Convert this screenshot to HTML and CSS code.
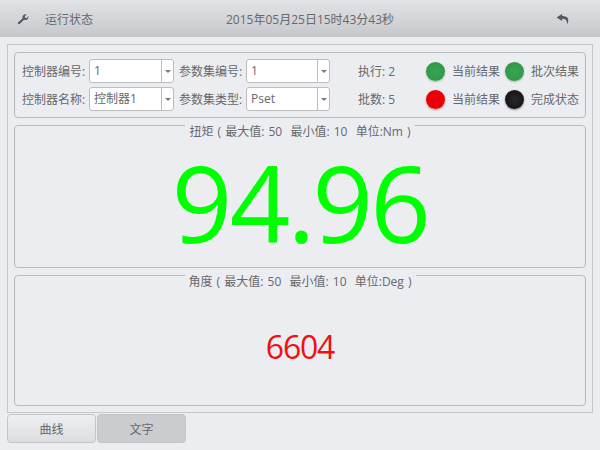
FILE: index.html
```html
<!DOCTYPE html>
<html lang="zh-CN">
<head>
  <meta charset="UTF-8">
  <meta name="viewport" content="width=device-width, initial-scale=1.0">
  <title>运行状态</title>
  <link rel="stylesheet" href="styles.css">
</head>
<body>

  <header class="topbar">
    <svg class="icon-wrench" width="12" height="12" viewBox="0 0 14 14">
      <path d="M1.2 12.6 C0.6 12 0.8 11.4 1.4 10.9 L6.4 6.4 C6 4.6 6.6 2.6 8.4 1.8 C9.4 1.3 10.6 1.3 11.4 1.7 L9 3.9 L9.6 5.6 L11.3 6 L13.2 3.6 C13.6 5 13.2 6.6 12 7.5 C10.8 8.4 9.4 8.5 8.2 8 L3.4 12.6 C2.7 13.3 1.8 13.3 1.2 12.6 Z" fill="#55585e"/>
    </svg>
    <span class="page-title">运行状态</span>
    <span class="clock">2015年05月25日15时43分43秒</span>
    <svg class="icon-back" width="14" height="12" viewBox="0 0 14 14" preserveAspectRatio="none">
      <path d="M6.2 0.8 L0.6 5.2 L6.2 9.4 L6.2 6.8 C9 6.8 10.8 8 11.4 13.2 C13.2 8.4 12.8 3.6 6.2 3.6 Z" fill="#55585e"/>
    </svg>
  </header>

  <main class="panel">
    <section class="filters">
      <div class="filter-row">
        <label class="field-label">控制器编号:</label>
        <div class="select"><span class="select-value">1</span><span class="select-arrow"></span></div>
        <label class="field-label second">参数集编号:</label>
        <div class="select select-narrow"><span class="select-value">1</span><span class="select-arrow"></span></div>
        <span class="count">执行: 2</span>
        <span class="lamp lamp-green"></span>
        <span class="lamp-text">当前结果</span>
        <span class="lamp lamp-green"></span>
        <span class="lamp-text">批次结果</span>
      </div>
      <div class="filter-row">
        <label class="field-label">控制器名称:</label>
        <div class="select"><span class="select-value">控制器1</span><span class="select-arrow"></span></div>
        <label class="field-label second">参数集类型:</label>
        <div class="select select-narrow"><span class="select-value">Pset</span><span class="select-arrow"></span></div>
        <span class="count">批数: 5</span>
        <span class="lamp lamp-red"></span>
        <span class="lamp-text">当前结果</span>
        <span class="lamp lamp-black"></span>
        <span class="lamp-text">完成状态</span>
      </div>
    </section>

    <section class="gauge gauge-torque">
      <div class="gauge-title">扭矩 ( 最大值: 50&nbsp;&nbsp;最小值: 10&nbsp;&nbsp;单位:Nm )</div>
      <div class="reading reading-big">94.96</div>
    </section>

    <section class="gauge gauge-angle">
      <div class="gauge-title">角度 ( 最大值: 50&nbsp;&nbsp;最小值: 10&nbsp;&nbsp;单位:Deg )</div>
      <div class="reading reading-small">6604</div>
    </section>
  </main>

  <nav class="tabs">
    <button class="tab">曲线</button>
    <button class="tab tab-active">文字</button>
  </nav>

</body>
</html>
```

FILE: styles.css
```css
* {
  box-sizing: border-box;
}

body {
  margin: 0;
  width: 600px;
  height: 450px;
  overflow: hidden;
  background-color: #ecedf1;
  color: #66686c;
  font-family: "Open Sans", "Noto Sans CJK SC", sans-serif;
  font-size: 12px;
}

.topbar {
  display: flex;
  align-items: center;
  height: 37px;
  padding: 0 30px 0 17px;
  background: linear-gradient(to bottom, #e2e3e6, #c6c7cb);
}

.page-title {
  margin-left: 16px;
  width: 181px;
}

.clock {
  flex: 1;
}

.panel {
  display: flex;
  flex-direction: column;
  gap: 7px;
  height: 369px;
  margin: 7px 7px 0;
  padding: 7px 6px 6px;
  border: 1px solid #c6c7cb;
}

.filters {
  display: flex;
  flex-direction: column;
  gap: 4px;
  height: 66px;
  padding: 6px 7px;
  border: 1px solid #b9babd;
  border-radius: 4px;
}

.filter-row {
  display: flex;
  align-items: center;
  height: 24px;
}

.field-label {
  flex: none;
  width: 67px;
  white-space: nowrap;
}

.field-label.second {
  margin-left: 5px;
}

.select {
  flex: none;
  display: flex;
  width: 85px;
  height: 24px;
  background-color: #fff;
  border: 1px solid #bcbdc0;
  border-radius: 3px;
}

.select-narrow {
  width: 84px;
}

.select-value {
  flex: 1;
  padding: 0 4px;
  line-height: 22px;
}

.select-arrow {
  position: relative;
  width: 12px;
  border-left: 1px solid #bcbdc0;
}

.select-arrow::after {
  content: "";
  position: absolute;
  top: 10px;
  left: 3px;
  border-top: 3px solid #77797d;
  border-left: 3px solid transparent;
  border-right: 3px solid transparent;
}

.count {
  flex: none;
  width: 68px;
  margin-left: 28px;
  white-space: nowrap;
}

.lamp {
  flex: none;
  width: 19px;
  height: 19px;
  margin-right: 7px;
  border-radius: 50%;
}

.lamp-green {
  background: radial-gradient(circle, #37a653, #2f9047);
  box-shadow: 0 1px 2px #8fbf9c;
}

.lamp-red {
  background: radial-gradient(circle, #f40006, #dd0008);
  box-shadow: 0 1px 2px #b98083;
}

.lamp-black {
  background: radial-gradient(circle, #2a2a2a, #0c0c0c);
  box-shadow: 0 1px 2px #808080;
}

.lamp-text {
  flex: none;
  width: 48px;
  margin-right: 5px;
  white-space: nowrap;
}

.gauge {
  display: flex;
  flex-direction: column;
  align-items: center;
  border: 1px solid #b9babd;
  border-radius: 4px;
}

.gauge-torque {
  height: 143px;
}

.gauge-angle {
  height: 131px;
}

/* sits on the top border and breaks the line, like a group box title */
.gauge-title {
  margin-top: -1px;
  padding: 0 4px;
  background-color: #ecedf1;
  line-height: 14px;
  word-spacing: 1px;
  white-space: nowrap;
}

.reading {
  flex: 1;
  display: flex;
  align-items: center;
  line-height: 1;
}

.reading-big {
  padding-bottom: 3px;
  color: #00ff00;
  font-size: 106px;
  letter-spacing: -2.8px;
}

.reading-small {
  color: #ee1111;
  font-size: 32px;
  letter-spacing: -1.2px;
}

.tabs {
  display: flex;
  gap: 1px;
  margin: 1px 7px 0;
}

.tab {
  width: 89px;
  height: 29px;
  padding: 0;
  color: #66686c;
  background: linear-gradient(to bottom, #eeeff2, #dcdde0);
  border: 1px solid #c3c4c7;
  border-radius: 4px;
  font-family: inherit;
  font-size: 12px;
}

.tab-active {
  background: #cbccd0;
}
```
